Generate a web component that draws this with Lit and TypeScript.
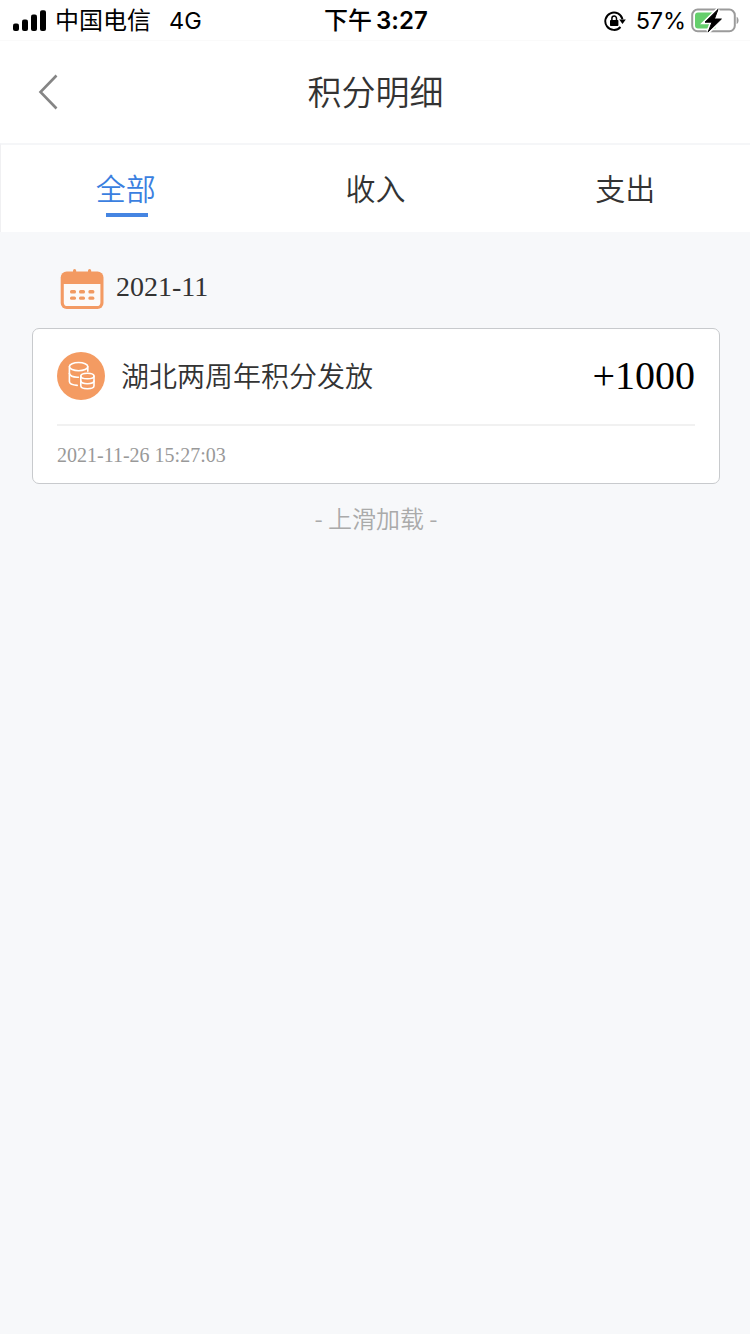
import { LitElement, html, css, svg } from "lit";
import { customElement, state } from "lit/decorators.js";
import { classMap } from "lit/directives/class-map.js";

@customElement("status-bar")
class StatusBar extends LitElement {
  static styles = css`
    :host {
      display: grid;
      grid-template-columns: 1fr auto 1fr;
      align-items: center;
      height: 40px;
      padding: 0 11px 0 13px;
      border-bottom: 1px solid #fafafa;
      background: #fff;
      color: #000;
      font: 24px/40px Inter, "Noto Sans CJK SC", sans-serif;
      white-space: nowrap;
    }
    .side { display: flex; align-items: center; height: 40px; }
    .right { justify-content: flex-end; }
    .side span, .time { padding-top: 1px; }
    .carrier { margin-left: 9px; }
    .network { margin-left: 18px; font-size: 23.5px; }
    .time { font-weight: 600; letter-spacing: 0.1px; }
    .cjk { font-weight: 500; margin-right: 4px; letter-spacing: 0; }
    .percent { margin: 0 5px 0 10px; font-size: 23.5px; letter-spacing: -0.1px; }
    svg { display: block; flex: none; }
  `;

  render() {
    return html`
      <div class="side">
        <svg width="33" height="22" viewBox="0 0 33 22">
          <rect x="0" y="13.5" width="6" height="7.5" rx="2" />
          <rect x="9" y="9.5" width="6" height="11.5" rx="2" />
          <rect x="18" y="4.5" width="6" height="16.5" rx="2" />
          <rect x="27" y="0.3" width="6" height="20.7" rx="2" />
        </svg>
        <span class="carrier">中国电信</span>
        <span class="network">4G</span>
      </div>
      <div class="time"><span class="cjk">下午</span>3:27</div>
      <div class="side right">
        <svg width="22" height="22" viewBox="0 0 22 22">
          <path d="M16.5 17A8.7 8.7 0 1 1 18.5 9.4" fill="none" stroke="#000" stroke-width="1.9" />
          <path d="M15.2 9.4h6.6l-3.3 4.6z" />
          <rect x="6" y="10" width="8.4" height="6" rx="0.8" />
          <path d="M7.9 10.4v-2a2.3 2.3 0 0 1 4.6 0v2" fill="none" stroke="#000" stroke-width="1.5" />
        </svg>
        <span class="percent">57%</span>
        <svg width="48" height="26" viewBox="0 0 48 26">
          <rect x="1.2" y="1.6" width="42.6" height="21.6" rx="5.5" fill="#fff" stroke="#9b9b9b" stroke-width="2" />
          <path d="M45.6 8.8v7.2c2.6-1.2 2.6-6 0-7.2z" fill="#9b9b9b" />
          <path d="M7 4.4h17.5v16H7a3 3 0 0 1-3-3v-10a3 3 0 0 1 3-3z" fill="#65cf6c" />
          <path d="M27 1.4 14 14.2h7l-3.8 9.6L30.4 11h-7z" stroke="#fff" stroke-width="4" />
          <path d="M27 1.4 14 14.2h7l-3.8 9.6L30.4 11h-7z" stroke="#000" stroke-width="1" stroke-linejoin="round" />
        </svg>
      </div>
    `;
  }
}

interface PointRecord {
  title: string;
  amount: string;
  time: string;
}

const calendarIcon = svg`
  <svg width="44" height="41" viewBox="0 0 44 41">
    <path d="M13 1.7a1.6 1.6 0 0 1 3.2 0V5H13zM28 1.7a1.6 1.6 0 0 1 3.2 0V5H28z" fill="#f19a61" />
    <rect x="0.7" y="2.6" width="42.8" height="37.4" rx="6" fill="#f39a62" />
    <path d="M3.8 15h36.6v18.4a3.6 3.6 0 0 1-3.6 3.6H7.4a3.6 3.6 0 0 1-3.6-3.6z" fill="#fcfaf8" />
    <g fill="#f19a61">
      <rect x="10" y="21" width="6" height="3.4" rx="1.5" />
      <rect x="19" y="21" width="6" height="3.4" rx="1.5" />
      <rect x="28.4" y="21" width="6" height="3.4" rx="1.5" />
      <rect x="10" y="27.4" width="6" height="3.4" rx="1.5" />
      <rect x="19" y="27.4" width="6" height="3.4" rx="1.5" />
      <rect x="28.4" y="27.4" width="6" height="3.4" rx="1.5" />
    </g>
  </svg>`;

const coinsIcon = svg`
  <svg width="48" height="48" viewBox="0 0 48 48">
    <circle cx="24" cy="24" r="24" fill="#f49b62" />
    <g fill="none" stroke="#fff" stroke-width="1.6" stroke-linecap="round" stroke-linejoin="round">
      <ellipse cx="21.6" cy="14.6" rx="9.2" ry="4.1" />
      <path d="M12.4 14.8v14.8c0 2.2 3.2 3.5 7.8 3.8" />
      <path d="M30.8 14.8v4.4" />
      <path d="M12.4 21.6c.8 2.7 4.6 3.8 9 3.6" />
      <ellipse cx="30.4" cy="24" rx="6.6" ry="2.8" />
      <path d="M23.8 24v9.8c0 1.8 2.9 3 6.6 3s6.6-1.2 6.6-3V24" />
      <path d="M23.8 29c.8 3.6 12.4 3.6 13.2 0" />
    </g>
  </svg>`;

@customElement("app-root")
class AppRoot extends LitElement {
  static styles = css`
    :host {
      display: flex;
      flex-direction: column;
      min-height: 1334px;
      background: #f7f8fa;
      color: #333;
      font-family: "Noto Sans CJK SC", sans-serif;
      font-weight: 350;
    }
    svg { display: block; flex: none; }
    .header {
      display: grid;
      grid-template-columns: 60px 1fr 60px;
      align-items: center;
      height: 102px;
      box-sizing: border-box;
      background: #fff;
    }
    .back { padding-left: 38px; }
    .title {
      margin: 0;
      padding: 0 0 2px 1px;
      text-align: center;
      font-size: 34px;
      font-weight: inherit;
      line-height: 50px;
    }
    .tabs {
      display: grid;
      grid-template-columns: repeat(3, 1fr);
      height: 89px;
      box-sizing: border-box;
      background: #fff;
      border-top: 2px solid #f5f6f8;
      border-left: 1px solid #f0f0f2;
    }
    .tab {
      display: flex;
      flex-direction: column;
      align-items: center;
      padding-top: 20px;
      font-size: 30px;
      line-height: 44px;
    }
    .tab::after { content: ""; width: 42px; height: 4px; margin: 4px 0 0 2px; }
    .active { color: #3b7fe0; }
    .active::after { background: #4585e2; }
    .month {
      display: flex;
      align-items: center;
      gap: 12px;
      padding: 37px 60px 18px;
      height: 41px;
    }
    .month-name {
      font: 28px/36px "Liberation Serif", serif;
      padding-bottom: 5px;
    }
    .card {
      margin: 0 30px 0 32px;
      box-sizing: border-box;
      height: 156px;
      padding: 0 24px;
      background: #fff;
      border: 1px solid #c8cacd;
      border-radius: 7px;
    }
    .row {
      display: flex;
      align-items: center;
      height: 94px;
      padding-bottom: 1px;
      border-bottom: 2px solid #f1f1f1;
    }
    .name { flex: 1; margin-left: 16px; padding-bottom: 2px; font-size: 28px; line-height: 40px; }
    .amount { font: 40px/48px "Liberation Serif", serif; color: #000; }
    .stamp { font: 20px/58px "Liberation Serif", serif; color: #999; }
    .more {
      margin-top: 16px;
      padding-left: 2px;
      text-align: center;
      font-size: 24px;
      line-height: 36px;
      color: #aaa;
    }
  `;

  private tabs = ["全部", "收入", "支出"];

  private records: PointRecord[] = [
    { title: "湖北两周年积分发放", amount: "+1000", time: "2021-11-26 15:27:03" },
  ];

  @state() private current = 0;

  render() {
    return html`
      <status-bar></status-bar>
      <div class="header">
        <div class="back">
          <svg width="22" height="38" viewBox="0 0 22 38">
            <path d="M18.5 2.5 2.5 19l16 16.5" fill="none" stroke="#858585" stroke-width="2.6" />
          </svg>
        </div>
        <h1 class="title">积分明细</h1>
      </div>
      <div class="tabs">
        ${this.tabs.map(
          (name, i) => html`<div
            class=${classMap({ tab: true, active: i === this.current })}
            @click=${() => (this.current = i)}
          >${name}</div>`
        )}
      </div>
      <div class="month">${calendarIcon}<span class="month-name">2021-11</span></div>
      ${this.records.map(
        (r) => html`
          <div class="card">
            <div class="row">
              ${coinsIcon}
              <span class="name">${r.title}</span>
              <span class="amount">${r.amount}</span>
            </div>
            <div class="stamp">${r.time}</div>
          </div>
        `
      )}
      <div class="more">- 上滑加载 -</div>
    `;
  }
}
